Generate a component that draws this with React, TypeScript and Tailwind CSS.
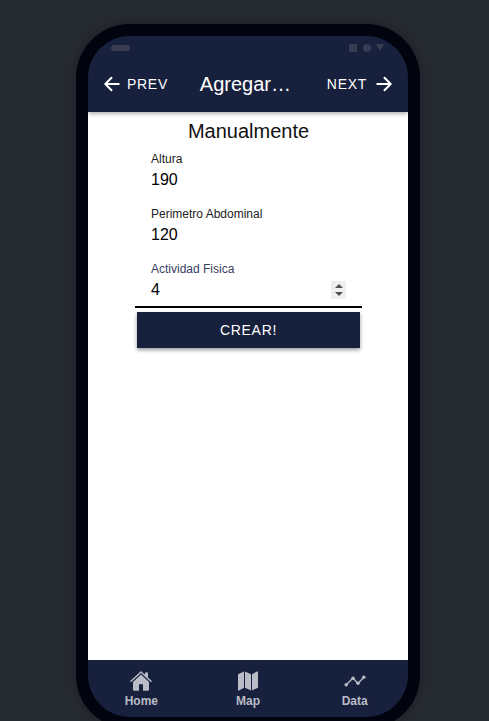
import React from 'react';
import { IoArrowBack, IoArrowForward } from 'react-icons/io5';

function HomeIcon() {
  return (
    <svg viewBox="0 0 22 22" className="size-[22px]" aria-hidden="true">
      <path d="M1 11.200 11 2l10 9.200" fill="none" stroke="currentColor" strokeWidth="1.500" strokeLinecap="round" strokeLinejoin="round" />
      <path d="M15 2.500h3v6l-3-2.700z" fill="currentColor" />
      <path d="M11 4.600 19 12v7.500a1.200 1.200 0 0 1-1.200 1.200H13v-6.500H9v6.500H4.200A1.200 1.200 0 0 1 3 19.500V12z" fill="currentColor" />
    </svg>
  );
}

function MapIcon() {
  return (
    <svg viewBox="0 0 22 22" className="size-[22px] fill-current" aria-hidden="true">
      <path d="M7 1.500v16.300l-5 2.700a.7.7 0 0 1-1-.6V5a1 1 0 0 1 .5-.9z" />
      <path d="m8 1.500 6 2.700v16.300l-6-2.700z" />
      <path d="M15 4.200l5-2.700a.7.7 0 0 1 1 .6V17a1 1 0 0 1-.5.900L15 20.500z" />
    </svg>
  );
}

function DataIcon() {
  return (
    <svg viewBox="0 0 22 22" className="size-[22px] fill-current" aria-hidden="true">
      <path d="m2 15 7-7 5 5.500 6-6.500" fill="none" stroke="currentColor" strokeWidth="1.300" />
      <circle cx="2.200" cy="14.800" r="1.700" />
      <circle cx="9" cy="8.200" r="1.700" />
      <circle cx="14" cy="13.300" r="1.700" />
      <circle cx="19.800" cy="7.200" r="1.700" />
    </svg>
  );
}

function Field({ id, label, value, active = false }: { id: string; label: string; value: number; active?: boolean }) {
  return (
    <div className={'flex flex-col px-4 pt-2 ' + (active ? 'border-b-2 border-black pb-1' : 'pb-1.5')}>
      <label htmlFor={id} className={'text-xs leading-4 ' + (active ? 'text-[#38405f]' : 'text-[#222222]')}>
        {label}
      </label>
      <div className="flex h-[25px] items-center">
        <input
          id={id}
          type="number"
          defaultValue={value}
          className="w-full min-w-0 flex-1 bg-transparent text-base leading-5 text-black outline-none [appearance:textfield] [&::-webkit-inner-spin-button]:appearance-none"
        />
        {active && (
          <div className="flex h-[18px] w-[15px] flex-col bg-[#efefef] text-[#505050]">
            <button type="button" aria-label="Aumentar" className="flex flex-1 items-end justify-center pb-[2px]">
              <svg viewBox="0 0 8 4" className="h-1 w-2 fill-current"><path d="M0 4 4 0 8 4z" /></svg>
            </button>
            <button type="button" aria-label="Disminuir" className="flex flex-1 items-start justify-center pt-[2px]">
              <svg viewBox="0 0 8 4" className="h-1 w-2 fill-current"><path d="M0 0 4 4 8 0z" /></svg>
            </button>
          </div>
        )}
      </div>
    </div>
  );
}

function Tab({ label, children }: { label: string; children: React.ReactNode }) {
  return (
    <a href="#" className="flex flex-1 flex-col items-center gap-px pt-[10px] text-[#b9bcc6]">
      {children}
      <span className="text-xs leading-4 font-bold">{label}</span>
    </a>
  );
}

export default function App() {
  return (
    <div className="flex h-screen justify-center overflow-hidden bg-[#262a31] pt-6 pr-4 pl-[23px] font-['Liberation_Sans',Arial,sans-serif]">
      <div className="h-[calc(100vh-16px)] w-full max-w-[344px] shrink-0 rounded-[54px] bg-[#01040f] p-3 shadow-[0_0_12px_rgba(0,0,0,0.25)]">
        <div className="flex h-full flex-col overflow-hidden rounded-[42px] bg-[#17203d]">
          <header className="z-10 bg-[#17203d] text-white shadow-[0_2px_4px_rgba(0,0,0,0.3)]">
            <div className="flex h-5 items-start justify-between pt-2 pr-6 pl-[23px]">
              <span className="mt-px h-[6px] w-[19px] rounded-full bg-[#383d54]" />
              <svg viewBox="0 0 35 8" className="h-2 w-[35px] fill-[#383d54]">
                <rect width="8" height="8" />
                <circle cx="18" cy="4" r="4" />
                <path d="M27 0h8l-4 7z" />
              </svg>
            </div>
            <div className="flex h-14 items-center px-[13px]">
              <button type="button" className="flex items-center gap-1 text-sm tracking-wider">
                <IoArrowBack className="size-[22px]" />
                PREV
              </button>
              <h1 className="min-w-0 flex-1 truncate pr-1 text-center text-xl">Agregar…</h1>
              <button type="button" className="flex items-center gap-1.5 text-sm tracking-wider">
                NEXT
                <IoArrowForward className="size-[22px]" />
              </button>
            </div>
          </header>

          <main className="flex-1 bg-white pt-[7px] pr-[46px] pl-[47px]">
            <h2 className="text-center text-xl leading-6 text-[#111111]">Manualmente</h2>
            <form onSubmit={(e) => e.preventDefault()}>
              <Field id="altura" label="Altura" value={190} />
              <Field id="perimetro" label="Perimetro Abdominal" value={120} />
              <Field id="actividad" label="Actividad Fisica" value={4} active />
              <div className="px-[2px] pt-1">
                <button
                  type="submit"
                  className="h-9 w-full bg-[#17203d] text-sm tracking-wider text-white shadow-[0_2px_4px_rgba(0,0,0,0.4)]"
                >
                  CREAR!
                </button>
              </div>
            </form>
          </main>

          <nav className="flex h-[57px] bg-[#17203d]">
            <Tab label="Home"><HomeIcon /></Tab>
            <Tab label="Map"><MapIcon /></Tab>
            <Tab label="Data"><DataIcon /></Tab>
          </nav>
        </div>
      </div>
    </div>
  );
}
